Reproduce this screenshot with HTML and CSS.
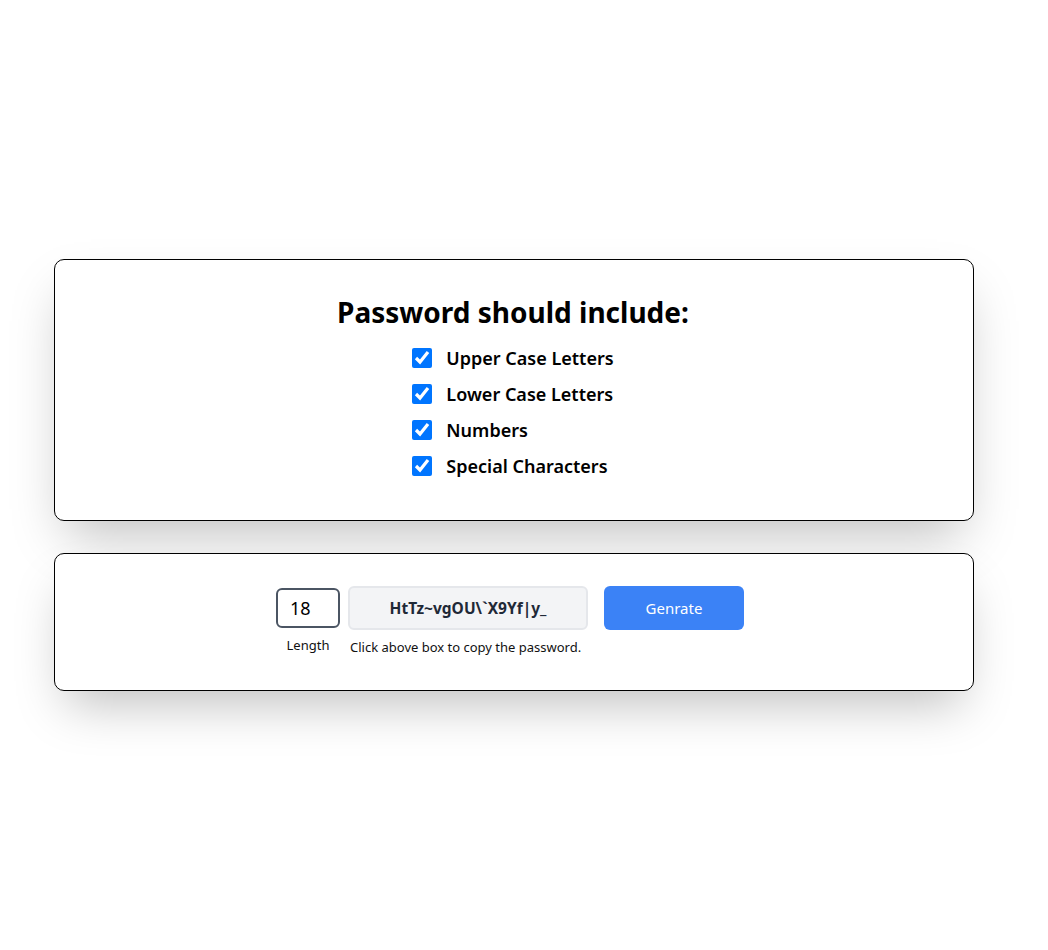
FILE: index.html
```html
<!DOCTYPE html>
<html>
<head>
<meta charset="utf-8">
<link rel="stylesheet" href="styles.css">
</head>
<body>
<main class="page">
  <section class="card options">
    <h1 class="title">Password should include:</h1>
    <div class="checks">
      <label class="check"><input type="checkbox" checked><span>Upper Case Letters</span></label>
      <label class="check"><input type="checkbox" checked><span>Lower Case Letters</span></label>
      <label class="check"><input type="checkbox" checked><span>Numbers</span></label>
      <label class="check"><input type="checkbox" checked><span>Special Characters</span></label>
    </div>
  </section>
  <section class="card generator">
    <div class="field length-field">
      <input class="length" type="number" value="18">
      <span class="hint">Length</span>
    </div>
    <div class="field pass-field">
      <div class="password">HtTz~vgOU\`X9Yf|y_</div>
      <span class="hint">Click above box to copy the password.</span>
    </div>
    <button class="gen">Genrate</button>
  </section>
</main>
</body>
</html>
```
FILE: styles.css
```css
* { box-sizing: border-box; }
html, body { margin: 0; padding: 0; background: #fff; }
body { font-family: "Noto Sans", "Open Sans", sans-serif; color: #000; }
.page {
  min-height: 950px;
  display: flex;
  flex-direction: column;
  justify-content: center;
  gap: 32px;
  padding-left: 54px;
}
.card {
  width: 920px;
  border: 1px solid #000;
  border-radius: 10px;
  background: #fff;
  box-shadow: 0 25px 50px -12px rgba(0,0,0,0.25);
}
.options {
  height: 262px;
  padding-top: 32px;
  display: flex;
  flex-direction: column;
  align-items: center;
}
.title {
  margin: 0 0 0 -2px;
  font-size: 28px;
  font-weight: 700;
  line-height: 40px;
}
.checks {
  display: flex;
  flex-direction: column;
  margin-top: 8px;
  margin-left: -2px;
}
.check {
  display: flex;
  align-items: center;
  height: 36px;
  font-size: 18px;
  font-weight: 600;
}
.check input {
  width: 20px;
  height: 20px;
  margin: 0 14px 0 0;
}
.generator {
  height: 138px;
  display: flex;
  justify-content: center;
  align-items: flex-start;
  padding-top: 32px;
  padding-right: 8px;
  gap: 8px;
}
.field {
  display: flex;
  flex-direction: column;
  align-items: center;
}
.pass-field { align-items: flex-start; }
.length {
  width: 64px;
  height: 40px;
  margin-top: 2px;
  border: 2px solid #4b5563;
  border-radius: 6px;
  font-family: inherit;
  font-size: 18px;
  padding: 0 12px;
  color: #000;
}
.length::-webkit-inner-spin-button { -webkit-appearance: none; }
.hint { font-size: 13px; color: #111; line-height: 18px; }
.length-field .hint { margin-top: 8px; }
.pass-field .hint { margin-top: 8px; padding-left: 2px; }
.password {
  width: 240px;
  height: 44px;
  background: #f3f4f6;
  border: 2px solid #e5e7eb;
  border-radius: 6px;
  display: flex;
  align-items: center;
  justify-content: center;
  font-weight: 700;
  font-size: 15.5px;
  color: #1f2937;
}
.gen {
  width: 140px;
  height: 44px;
  margin-left: 8px;
  background: #3b82f6;
  color: #fff;
  border: none;
  border-radius: 6px;
  font-family: inherit;
  font-size: 15px;
}
```
